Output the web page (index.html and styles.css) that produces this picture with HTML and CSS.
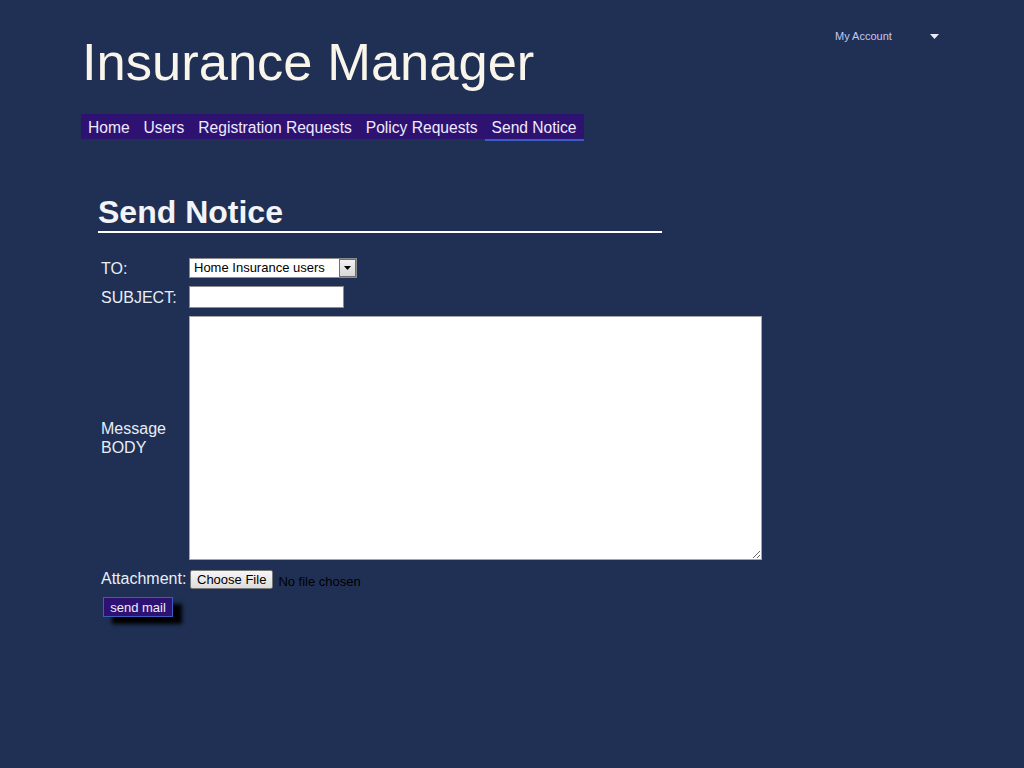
FILE: index.html
```html
<!DOCTYPE html>
<html>
<head>
<meta charset="utf-8">
<title>Insurance Manager - Send Notice</title>
<link rel="stylesheet" href="styles.css">
</head>
<body>
<header class="header">
  <div class="brand">
    <h1 class="title">Insurance Manager</h1>
    <nav class="nav">
      <a class="nav-item" href="#">Home</a>
      <a class="nav-item" href="#">Users</a>
      <a class="nav-item" href="#">Registration Requests</a>
      <a class="nav-item" href="#">Policy Requests</a>
      <a class="nav-item active" href="#">Send Notice</a>
    </nav>
  </div>
  <div class="account">
    <span class="account-label">My Account</span>
    <svg class="account-caret" width="9" height="5" viewBox="0 0 9 5"><path d="M0 0H9L4.5 5Z" fill="#e8ecf6"/></svg>
  </div>
</header>
<main class="content">
  <h2 class="page-title">Send Notice</h2>
  <form class="notice-form">
    <label class="field-label">TO:</label>
    <div class="field">
      <div class="select-wrap">
        <select class="select">
          <option>Home Insurance users</option>
          <option>Vehicle Insurance users</option>
          <option>Life Insurance users</option>
        </select>
        <span class="select-arrow"><svg width="7" height="4" viewBox="0 0 7 4"><path d="M0 0H7L3.5 4Z" fill="#000"/></svg></span>
      </div>
    </div>
    <label class="field-label">SUBJECT:</label>
    <div class="field"><input class="text-input" type="text"></div>
    <label class="field-label">Message<br>BODY</label>
    <div class="field"><textarea class="textarea"></textarea></div>
    <label class="field-label">Attachment:</label>
    <div class="field file-field">
      <span class="file-button">Choose File</span>
      <span class="file-status">No file chosen</span>
    </div>
    <div class="submit-row"><button class="send-button" type="button">send mail</button></div>
  </form>
</main>
</body>
</html>
```

FILE: styles.css
```css
html, body {
  margin: 0;
  padding: 0;
}
body {
  background: #1f3054;
  font-family: "Liberation Sans", Arial, sans-serif;
  color: #e8eef8;
  min-height: 768px;
}
.header {
  display: flex;
  align-items: flex-start;
  padding: 30px 84px 0 81px;
}
.brand {
  flex: 1;
}
.title {
  margin: 0 0 0 1px;
  font-size: 52.5px;
  line-height: 64px;
  font-weight: normal;
  color: #faf5ea;
}
.nav {
  display: flex;
  align-items: flex-start;
  margin-top: 20px;
}
.nav-item {
  display: block;
  background: #2e1272;
  color: #eeeaff;
  text-decoration: none;
  font-size: 15.6px;
  line-height: 25px;
  padding: 1px 7px 0;
  height: 24px;
}
.nav-item.active {
  border-bottom: 2px solid #3d5cc2;
}
.account {
  display: flex;
  align-items: center;
  justify-content: space-between;
  width: 105px;
  margin-top: 0;
}
.account-label {
  font-size: 11px;
  line-height: 13px;
  color: #c4c8f2;
}
.account-caret {
  margin-right: 1px;
}
.content {
  padding: 53px 0 0 98px;
}
.page-title {
  margin: 0;
  width: 564px;
  font-size: 32px;
  line-height: 37px;
  font-weight: bold;
  color: #f2f4f8;
  border-bottom: 2px solid #ffffff;
}
.notice-form {
  display: grid;
  grid-template-columns: 88px auto;
  row-gap: 8px;
  align-items: center;
  margin: 25px 0 0 3px;
}
.field-label {
  font-size: 16px;
  line-height: 19px;
  color: #e8eef8;
}
.field {
  display: flex;
  align-items: center;
}
.select-wrap {
  position: relative;
  width: 168px;
  height: 20px;
}
.select {
  appearance: none;
  -webkit-appearance: none;
  box-sizing: border-box;
  width: 168px;
  height: 20px;
  margin: 0;
  padding: 0 0 0 4px;
  border: 1px solid #8c8c8c;
  border-radius: 0;
  background: #fff;
  color: #000;
  font-family: "Liberation Sans", Arial, sans-serif;
  font-size: 13px;
  line-height: 18px;
}
.select-arrow {
  position: absolute;
  right: 1px;
  top: 1px;
  box-sizing: border-box;
  width: 17px;
  height: 18px;
  display: flex;
  align-items: center;
  justify-content: center;
  background: linear-gradient(#f2f2f2, #d8d8d8);
  border: 1px solid #6f6f6f;
  pointer-events: none;
}
.text-input {
  box-sizing: border-box;
  width: 155px;
  height: 22px;
  margin: 0;
  border: 1px solid #8c8c8c;
  background: #fff;
  font-family: "Liberation Sans", Arial, sans-serif;
  font-size: 13px;
}
.textarea {
  box-sizing: border-box;
  width: 573px;
  height: 244px;
  margin: 0;
  border: 1px solid #a6a6a6;
  background: #fff;
  font-family: "Liberation Sans", Arial, sans-serif;
  font-size: 13px;
}
.file-field {
  margin-top: 1px;
  gap: 5px;
}
.file-button {
  box-sizing: border-box;
  height: 19px;
  padding: 0 6px;
  margin-left: 1px;
  border: 1px solid #7a7a7a;
  border-radius: 2px;
  background: linear-gradient(#f6f6f6, #dddddd);
  color: #000;
  font-size: 13px;
  line-height: 17px;
}
.file-status {
  font-size: 13px;
  color: #000;
  padding-top: 5px;
}
.submit-row {
  grid-column: 1 / 3;
  margin-top: 0;
}
.send-button {
  box-sizing: border-box;
  width: 70px;
  height: 20px;
  margin: 0 0 0 2px;
  padding: 0;
  background: #2e1272;
  border: 1px solid #3d5cc2;
  color: #eeeaff;
  font-family: "Liberation Sans", Arial, sans-serif;
  font-size: 13px;
  box-shadow: 9px 7px 4px #000;
}
```
